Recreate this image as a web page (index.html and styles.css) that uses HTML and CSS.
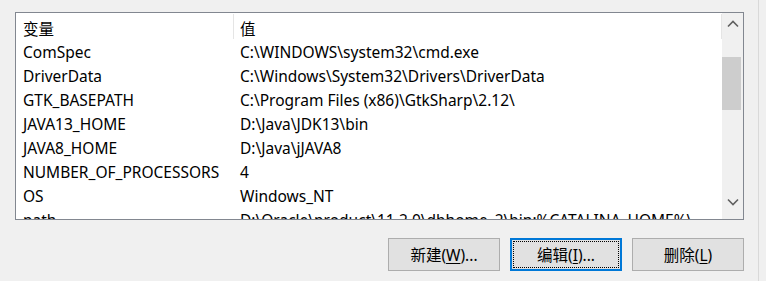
FILE: index.html
```html
<!DOCTYPE html>
<html lang="zh-CN">
<head>
<meta charset="utf-8">
<title>环境变量</title>
<link rel="stylesheet" href="styles.css">
</head>
<body>
<div class="dialog">
  <div class="listbox">
    <div class="table">
      <div class="header">
        <div class="hcell c1">变量</div>
        <div class="hcell c2">值</div>
      </div>
      <div class="rows">
        <div class="row"><div class="cell c1">ComSpec</div><div class="cell c2">C:\WINDOWS\system32\cmd.exe</div></div>
        <div class="row"><div class="cell c1">DriverData</div><div class="cell c2">C:\Windows\System32\Drivers\DriverData</div></div>
        <div class="row"><div class="cell c1">GTK_BASEPATH</div><div class="cell c2">C:\Program Files (x86)\GtkSharp\2.12\</div></div>
        <div class="row"><div class="cell c1">JAVA13_HOME</div><div class="cell c2">D:\Java\JDK13\bin</div></div>
        <div class="row"><div class="cell c1">JAVA8_HOME</div><div class="cell c2">D:\Java\jJAVA8</div></div>
        <div class="row"><div class="cell c1">NUMBER_OF_PROCESSORS</div><div class="cell c2">4</div></div>
        <div class="row"><div class="cell c1">OS</div><div class="cell c2">Windows_NT</div></div>
        <div class="row"><div class="cell c1">path</div><div class="cell c2">D:\Oracle\product\11.2.0\dbhome_2\bin;%CATALINA_HOME%\</div></div>
      </div>
    </div>
    <div class="scrollbar">
      <div class="arrow">
        <svg width="12" height="8" viewBox="0 0 12 8"><path d="M1 6.5 L6 1.5 L11 6.5" fill="none" stroke="#606060" stroke-width="1.6"/></svg>
      </div>
      <div class="track">
        <div class="thumb"></div>
      </div>
      <div class="arrow down">
        <svg width="12" height="8" viewBox="0 0 12 8"><path d="M1 1.5 L6 6.5 L11 1.5" fill="none" stroke="#606060" stroke-width="1.6"/></svg>
      </div>
    </div>
  </div>
  <div class="buttons">
    <button class="btn">新建(<u>W</u>)...</button>
    <button class="btn focused"><span class="focusrect">编辑(<u>I</u>)...</span></button>
    <button class="btn">删除(<u>L</u>)</button>
  </div>
</div>
</body>
</html>
```

FILE: styles.css
```css
html, body {
  margin: 0;
  padding: 0;
  background: #f0f0f0;
}
body {
  width: 766px;
  height: 281px;
  overflow: hidden;
  font-family: "Noto Sans", "Noto Sans CJK SC", sans-serif;
  font-size: 15.5px;
  color: #000;
}
.dialog {
  width: 759px;
  height: 281px;
  box-sizing: border-box;
  border-right: 1px solid #d9d9d9;
  padding: 12px 15px 0 15px;
}
.listbox {
  display: flex;
  width: 729px;
  height: 208px;
  box-sizing: border-box;
  border: 1px solid #828790;
  background: #fff;
}
.table {
  width: 706px;
  overflow: hidden;
}
.header {
  display: flex;
  height: 27px;
  align-items: stretch;
}
.hcell {
  display: flex;
  align-items: center;
  box-sizing: border-box;
  padding-top: 3px;
  border-right: 1px solid #e5e5e5;
  margin: 1px 0 1px 0;
}
.c1 {
  width: 218px;
  padding-left: 7px;
  box-sizing: border-box;
  flex: none;
}
.c2 {
  width: 488px;
  padding-left: 6px;
  box-sizing: border-box;
  flex: none;
  white-space: nowrap;
  overflow: hidden;
}
.row {
  display: flex;
  height: 24px;
  align-items: center;
}
.cell {
  white-space: nowrap;
  line-height: 24px;
}
.scrollbar {
  width: 21px;
  display: flex;
  flex-direction: column;
  background: #f0f0f0;
}
.arrow {
  height: 21px;
  display: flex;
  align-items: center;
  justify-content: center;
  flex: none;
}
.arrow.down {
  height: 25px;
  align-items: flex-start;
  padding-top: 4px;
  box-sizing: border-box;
}
.track {
  flex: 1;
  padding-top: 23px;
}
.thumb {
  width: 19px;
  height: 53px;
  background: #cdcdcd;
}
.buttons {
  display: flex;
  justify-content: flex-end;
  gap: 10px;
  margin-top: 18px;
  margin-right: -1px;
}
.btn {
  width: 112px;
  height: 33px;
  box-sizing: border-box;
  border: 1px solid #adadad;
  background: #e1e1e1;
  font-family: "Noto Sans", "Noto Sans CJK SC", sans-serif;
  font-size: 15.5px;
  color: #000;
  padding: 0;
  display: flex;
  align-items: center;
  justify-content: center;
}
.btn u {
  text-decoration-thickness: 1px;
  text-underline-offset: 2px;
}
.focused {
  border: 2px solid #0078d7;
  padding: 1px;
}
.focusrect {
  flex: 1;
  align-self: stretch;
  display: flex;
  align-items: center;
  justify-content: center;
  border: 1px dotted #000;
}
```
